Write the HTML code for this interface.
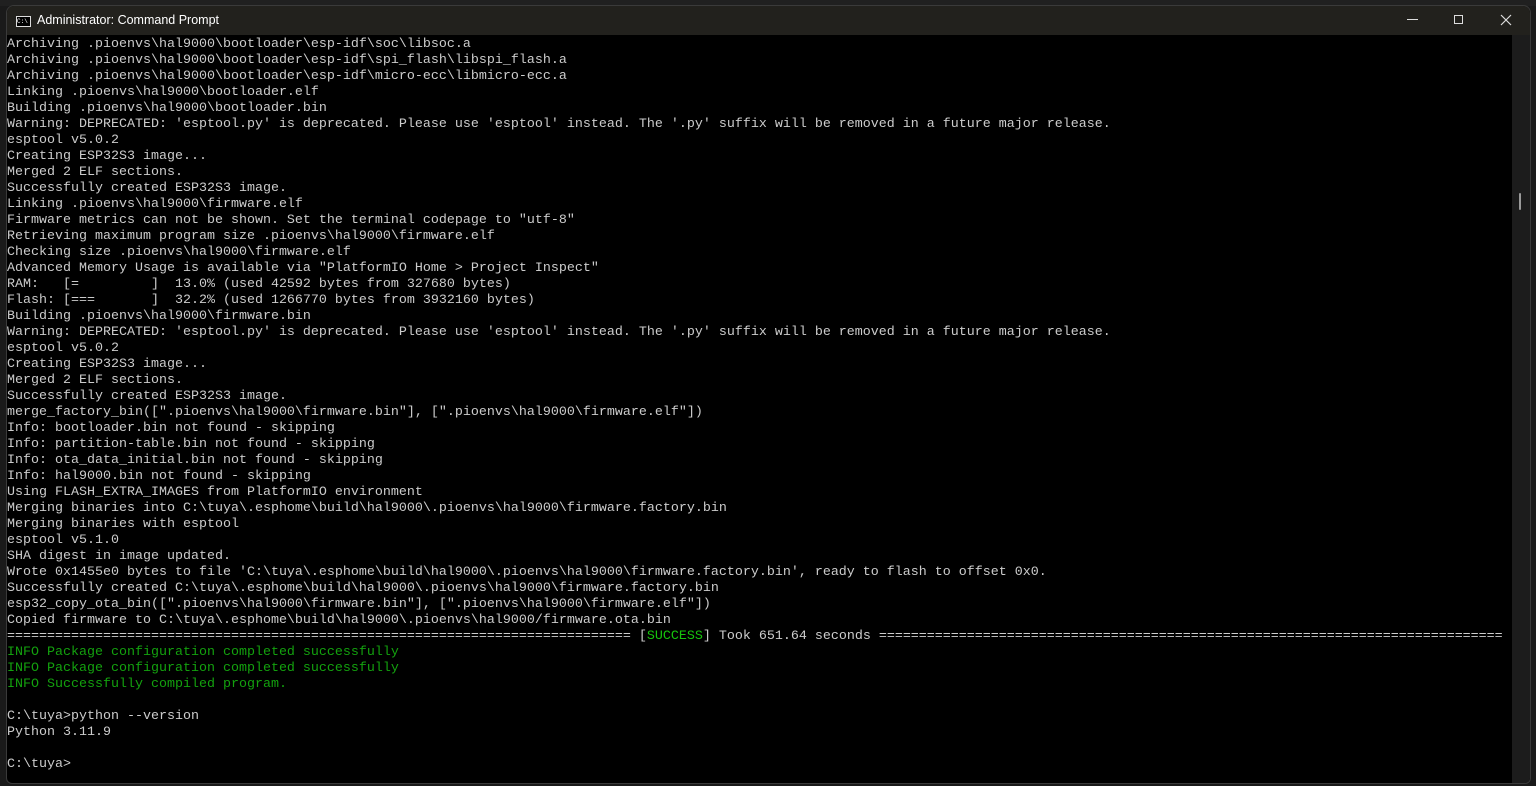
<!DOCTYPE html><html><head><style>
body{margin:0;width:1536px;height:786px;background:#1a1a1a;overflow:hidden;position:relative;font-family:"Liberation Sans",sans-serif}
.bgtop{position:absolute;left:0;top:0;width:1536px;height:6px;background:#202020}
.win{position:absolute;left:6px;top:5px;width:1523px;height:777px;background:#000;border:1px solid #3a3a3a;border-radius:8px 8px 6px 6px;overflow:hidden}
.title{position:absolute;left:0;top:0;right:0;height:29px;background:#22211d;color:#fff;font-size:12.5px}
.title span{position:absolute;left:30px;top:7px}
.icon{position:absolute;left:9px;top:10px;width:13px;height:9px;border:1px solid #ddd;background:#000;font:6px "Liberation Mono";color:#fff;line-height:9px}
.ctl{position:absolute;top:0;height:29px;color:#ddd}
.sb{position:absolute;right:0;top:29px;width:18px;bottom:0;background:#1c1c1c}
.thumb{position:absolute;left:7px;top:158px;width:2px;height:17px;background:#9a9a9a;border-radius:1px}
pre{position:absolute;left:0;top:31px;margin:0;font:13.33px/16px "Liberation Mono",monospace;color:#cccccc;white-space:pre}
.g{color:#13a10e}.s{color:#16c60c}
</style></head><body><div class="bgtop"></div>
<div class="win">
<div class="title"><div class="icon">C:\</div><span>Administrator: Command Prompt</span>
<div class="ctl" style="left:1400px;top:13px;width:11px;height:1px;background:#ddd"></div>
<div class="ctl" style="left:1447px;top:9px;width:9px;height:9px;border:1px solid #ddd;box-sizing:border-box"></div>
<svg style="position:absolute;left:1493px;top:8px" width="12" height="12"><path d="M1 1L11 11M11 1L1 11" stroke="#ddd" stroke-width="1.2"/></svg>
</div>
<div class="sb"><div class="thumb"></div></div>
<pre>Archiving .pioenvs\hal9000\bootloader\esp-idf\soc\libsoc.a
Archiving .pioenvs\hal9000\bootloader\esp-idf\spi_flash\libspi_flash.a
Archiving .pioenvs\hal9000\bootloader\esp-idf\micro-ecc\libmicro-ecc.a
Linking .pioenvs\hal9000\bootloader.elf
Building .pioenvs\hal9000\bootloader.bin
Warning: DEPRECATED: 'esptool.py' is deprecated. Please use 'esptool' instead. The '.py' suffix will be removed in a future major release.
esptool v5.0.2
Creating ESP32S3 image...
Merged 2 ELF sections.
Successfully created ESP32S3 image.
Linking .pioenvs\hal9000\firmware.elf
Firmware metrics can not be shown. Set the terminal codepage to "utf-8"
Retrieving maximum program size .pioenvs\hal9000\firmware.elf
Checking size .pioenvs\hal9000\firmware.elf
Advanced Memory Usage is available via "PlatformIO Home > Project Inspect"
RAM:   [=         ]  13.0% (used 42592 bytes from 327680 bytes)
Flash: [===       ]  32.2% (used 1266770 bytes from 3932160 bytes)
Building .pioenvs\hal9000\firmware.bin
Warning: DEPRECATED: 'esptool.py' is deprecated. Please use 'esptool' instead. The '.py' suffix will be removed in a future major release.
esptool v5.0.2
Creating ESP32S3 image...
Merged 2 ELF sections.
Successfully created ESP32S3 image.
merge_factory_bin([".pioenvs\hal9000\firmware.bin"], [".pioenvs\hal9000\firmware.elf"])
Info: bootloader.bin not found - skipping
Info: partition-table.bin not found - skipping
Info: ota_data_initial.bin not found - skipping
Info: hal9000.bin not found - skipping
Using FLASH_EXTRA_IMAGES from PlatformIO environment
Merging binaries into C:\tuya\.esphome\build\hal9000\.pioenvs\hal9000\firmware.factory.bin
Merging binaries with esptool
esptool v5.1.0
SHA digest in image updated.
Wrote 0x1455e0 bytes to file 'C:\tuya\.esphome\build\hal9000\.pioenvs\hal9000\firmware.factory.bin', ready to flash to offset 0x0.
Successfully created C:\tuya\.esphome\build\hal9000\.pioenvs\hal9000\firmware.factory.bin
esp32_copy_ota_bin([".pioenvs\hal9000\firmware.bin"], [".pioenvs\hal9000\firmware.elf"])
Copied firmware to C:\tuya\.esphome\build\hal9000\.pioenvs\hal9000/firmware.ota.bin
============================================================================== [<span class="s">SUCCESS</span>] Took 651.64 seconds ==============================================================================
<span class="g">INFO Package configuration completed successfully
INFO Package configuration completed successfully
INFO Successfully compiled program.</span>

C:\tuya>python --version
Python 3.11.9

C:\tuya></pre>
</div></body></html>
